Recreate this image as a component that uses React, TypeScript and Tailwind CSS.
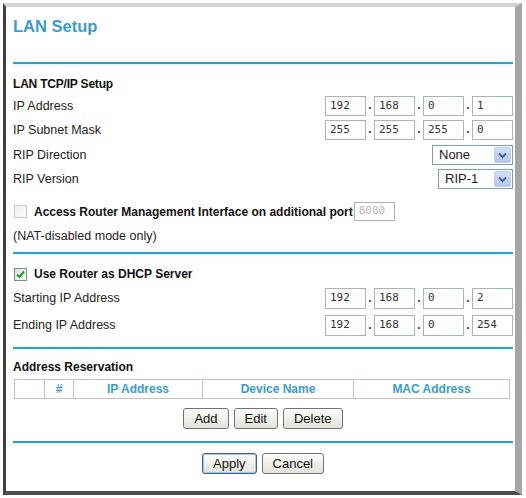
import React from "react";

const sans = { fontFamily: '"Liberation Sans", Arial, sans-serif' };
const mono = { fontFamily: '"DejaVu Sans Mono", "Liberation Mono", monospace' };

const IpBox: React.FC<{ value: string; disabled?: boolean }> = ({ value, disabled }) => (
  <div
    className={`w-[41px] h-full border border-[#a7b3c2] bg-white pl-[4px] flex items-center text-[11px] ${
      disabled ? "text-[#b8b8b8]" : "text-[#333]"
    }`}
    style={mono}
  >
    {value}
  </div>
);

const IpRow: React.FC<{ label: string; parts: string[]; h: string; mt: string }> = ({ label, parts, h, mt }) => (
  <div className={`flex items-center justify-between ${h} ${mt}`}>
    <span className="text-[12.5px] text-[#222]">{label}</span>
    <div className="flex h-full items-stretch">
      {parts.map((p, i) => (
        <React.Fragment key={i}>
          {i > 0 && <span className="w-[8px] flex items-end justify-center pb-[2px] text-[12px] font-bold text-[#333]">.</span>}
          <IpBox value={p} />
        </React.Fragment>
      ))}
    </div>
  </div>
);

const Select: React.FC<{ value: string; w: string }> = ({ value, w }) => (
  <div className={`${w} h-[20px] border border-[#7f9db9] bg-white flex items-stretch`}>
    <span className="flex-1 flex items-center pl-[6px] text-[13px] text-[#222]">{value}</span>
    <span className="w-[17px] m-[1px] rounded-[2px] border border-[#b9cdf5] bg-gradient-to-b from-[#d4e1fc] to-[#b1c5f3] flex items-center justify-center">
      <svg width="9" height="7" viewBox="0 0 9 7">
        <path d="M1 1.5 L4.5 5 L8 1.5" fill="none" stroke="#4d6185" strokeWidth="2" />
      </svg>
    </span>
  </div>
);

const Divider: React.FC<{ mt: string }> = ({ mt }) => (
  <div className={mt}>
    <div className="h-[2px] bg-[#2f9dd0]" />
    <div className="h-[3px] bg-gradient-to-b from-[#e6f2f8] to-white" />
  </div>
);

const Checkbox: React.FC<{ checked?: boolean }> = ({ checked }) =>
  checked ? (
    <span className="shrink-0 w-[13px] h-[13px] border border-[#6d8fb2] bg-gradient-to-br from-[#dcdcd6] to-white flex items-center justify-center">
      <svg width="9" height="9" viewBox="0 0 9 9">
        <path d="M1 4.5 L3.5 7 L8 1.5" fill="none" stroke="#21a121" strokeWidth="2" />
      </svg>
    </span>
  ) : (
    <span className="shrink-0 block w-[13px] h-[13px] border border-[#c9c9c9] bg-gradient-to-br from-[#eeeeea] to-white" />
  );

const Btn: React.FC<{ label: string; primary?: boolean }> = ({ label, primary }) => (
  <button
    className={`h-[21px] px-[10px] rounded-[3px] border text-[13px] text-[#111] bg-gradient-to-b from-[#fdfdfb] to-[#e3e2da] ${
      primary ? "border-[#3c5f8e] shadow-[inset_0_0_0_1px_#a9c4ee]" : "border-[#6f7478]"
    }`}
    style={sans}
  >
    {label}
  </button>
);

export default function App() {
  return (
    <div className="w-[526px] h-[498px] bg-white pt-[3px] pl-[3px] pr-[4px] pb-[3px]" style={sans}>
      <div className="h-full border-t-[4px] border-t-[#d2d2d2] border-l-[3px] border-l-[#3f3f3f] border-r-[7px] border-r-[#a6a6a6] border-b-[4px] border-b-[#4d4d4d] pl-[7px] pr-[2px]">
        <div className="mt-[9px] h-[20px] flex items-center text-[16.5px] font-bold text-[#3a9dcf]">LAN Setup</div>
        <Divider mt="mt-[26px]" />

        <div className="mt-[6px] h-[22px] flex items-center text-[12px] font-bold text-[#111] tracking-[-0.2px]">LAN TCP/IP Setup</div>
        <IpRow label="IP Address" parts={["192", "168", "0", "1"]} h="h-[20px]" mt="mt-[1px]" />
        <IpRow label="IP Subnet Mask" parts={["255", "255", "255", "0"]} h="h-[20px]" mt="mt-[4px]" />
        <div className="mt-[5px] h-[20px] flex items-center justify-between">
          <span className="text-[12.5px] text-[#222]">RIP Direction</span>
          <Select value="None" w="w-[81px]" />
        </div>
        <div className="mt-[4px] h-[20px] flex items-center justify-between">
          <span className="text-[12.5px] text-[#222]">RIP Version</span>
          <Select value="RIP-1" w="w-[75px]" />
        </div>
        <div className="mt-[13px] h-[19px] flex items-center">
          <span className="ml-[1px] shrink-0">
            <Checkbox />
          </span>
          <span className="ml-[7px] text-[12px] font-bold text-[#111] whitespace-nowrap">Access Router Management Interface on additional port</span>
          <div className="ml-[1px] h-full shrink-0">
            <IpBox value="8080" disabled />
          </div>
        </div>
        <div className="mt-[7px] h-[16px] flex items-center text-[12.5px] text-[#222]">(NAT-disabled mode only)</div>
        <Divider mt="mt-[8px]" />

        <div className="mt-[7px] h-[20px] flex items-center">
          <span className="ml-[1px] shrink-0">
            <Checkbox checked />
          </span>
          <span className="ml-[7px] text-[12px] font-bold text-[#111]">Use Router as DHCP Server</span>
        </div>
        <IpRow label="Starting IP Address" parts={["192", "168", "0", "2"]} h="h-[21px]" mt="mt-[4px]" />
        <IpRow label="Ending IP Address" parts={["192", "168", "0", "254"]} h="h-[21px]" mt="mt-[6px]" />
        <Divider mt="mt-[11px]" />

        <div className="mt-[6px] h-[18px] flex items-center text-[12px] font-bold text-[#111]">Address Reservation</div>
        <div className="mt-[3px] ml-[1px] mr-[3px] h-[20px] border border-[#c9c2b8] flex text-[12px] font-bold text-[#3a9dcf]">
          <div className="w-[30px] border-r border-[#c9c2b8]" />
          <div className="w-[29px] border-r border-[#c9c2b8] flex items-center justify-center">#</div>
          <div className="w-[129px] border-r border-[#c9c2b8] flex items-center justify-center">IP Address</div>
          <div className="w-[151px] border-r border-[#c9c2b8] flex items-center justify-center">Device Name</div>
          <div className="flex-1 flex items-center justify-center">MAC Address</div>
        </div>
        <div className="mt-[9px] flex justify-center gap-[5px]">
          <Btn label="Add" />
          <Btn label="Edit" />
          <Btn label="Delete" />
        </div>
        <Divider mt="mt-[12px]" />

        <div className="mt-[7px] flex justify-center gap-[5px]">
          <Btn label="Apply" primary />
          <Btn label="Cancel" />
        </div>
      </div>
    </div>
  );
}
